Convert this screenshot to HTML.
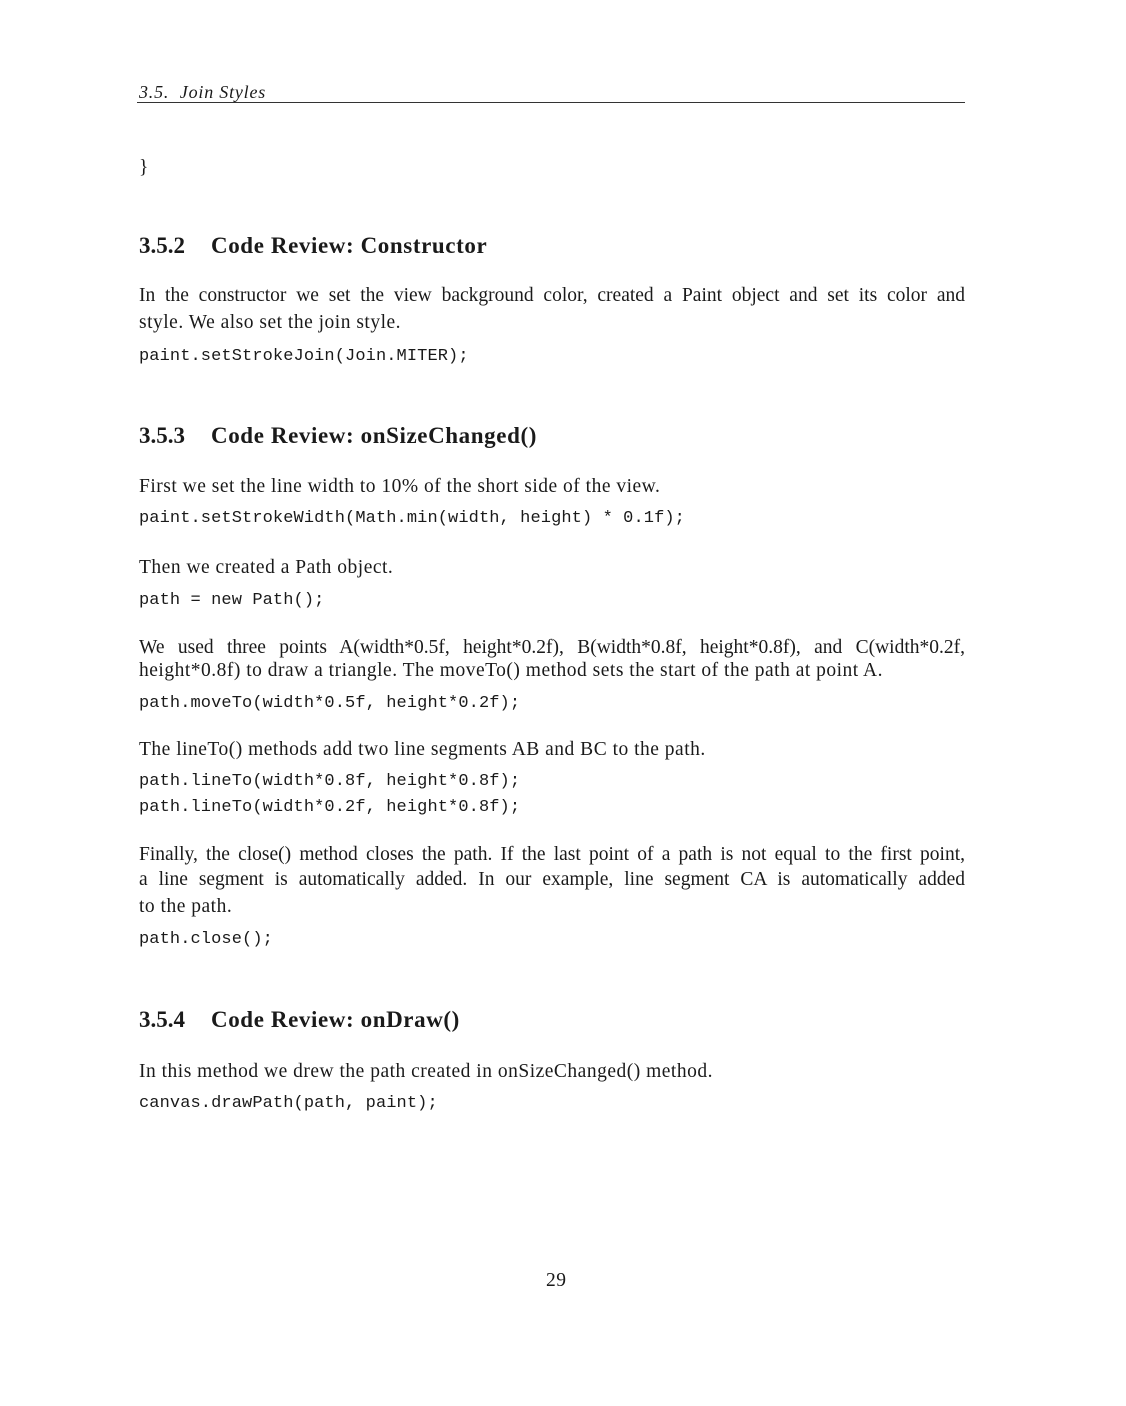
<!DOCTYPE html>
<html><head><meta charset="utf-8"><style>
body{margin:0;background:#fff;}
.p{position:relative;width:1126px;height:1406px;background:#fff;color:#1a1a1a;overflow:hidden}
.l{position:absolute;left:139px;height:26px;line-height:26px;white-space:nowrap;font-family:"Liberation Serif",serif;font-size:19.5px;letter-spacing:0.5px}
.j{width:826px;text-align:justify;text-align-last:justify;letter-spacing:0}
.c{font-family:"Liberation Mono",monospace;font-size:17px;letter-spacing:0.1px}
.h{font-weight:bold;font-size:23px;letter-spacing:0.6px}
.h span{display:inline-block;width:72px;letter-spacing:0}
</style></head><body><div class="p">
<div class="l" style="top:79px;font-style:italic;font-size:18px;letter-spacing:0.8px">3.5.&nbsp; Join Styles</div>
<div style="position:absolute;left:137px;top:102px;width:828px;height:1px;background:#333"></div>
<div class="l" style="top:155px">}</div>
<div class="l h" style="top:233px"><span>3.5.2</span>Code Review: Constructor</div>
<div class="l j" style="top:283px">In the constructor we set the view background color, created a Paint object and set its color and</div>
<div class="l" style="top:310px">style. We also set the join style.</div>
<div class="l c" style="top:344px">paint.setStrokeJoin(Join.MITER);</div>
<div class="l h" style="top:423px"><span>3.5.3</span>Code Review: onSizeChanged()</div>
<div class="l" style="top:474px">First we set the line width to 10% of the short side of the view.</div>
<div class="l c" style="top:506px">paint.setStrokeWidth(Math.min(width, height) * 0.1f);</div>
<div class="l" style="top:555px">Then we created a Path object.</div>
<div class="l c" style="top:588px">path = new Path();</div>
<div class="l j" style="top:635px">We used three points A(width*0.5f, height*0.2f), B(width*0.8f, height*0.8f), and C(width*0.2f,</div>
<div class="l" style="top:658px">height*0.8f) to draw a triangle. The moveTo() method sets the start of the path at point A.</div>
<div class="l c" style="top:691px">path.moveTo(width*0.5f, height*0.2f);</div>
<div class="l" style="top:737px">The lineTo() methods add two line segments AB and BC to the path.</div>
<div class="l c" style="top:769px">path.lineTo(width*0.8f, height*0.8f);</div>
<div class="l c" style="top:795px">path.lineTo(width*0.2f, height*0.8f);</div>
<div class="l j" style="top:842px">Finally, the close() method closes the path. If the last point of a path is not equal to the first point,</div>
<div class="l j" style="top:867px">a line segment is automatically added. In our example, line segment CA is automatically added</div>
<div class="l" style="top:894px">to the path.</div>
<div class="l c" style="top:927px">path.close();</div>
<div class="l h" style="top:1007px"><span>3.5.4</span>Code Review: onDraw()</div>
<div class="l" style="top:1059px">In this method we drew the path created in onSizeChanged() method.</div>
<div class="l c" style="top:1091px">canvas.drawPath(path, paint);</div>
<div class="l" style="top:1268px;left:546px">29</div>
</div></body></html>
